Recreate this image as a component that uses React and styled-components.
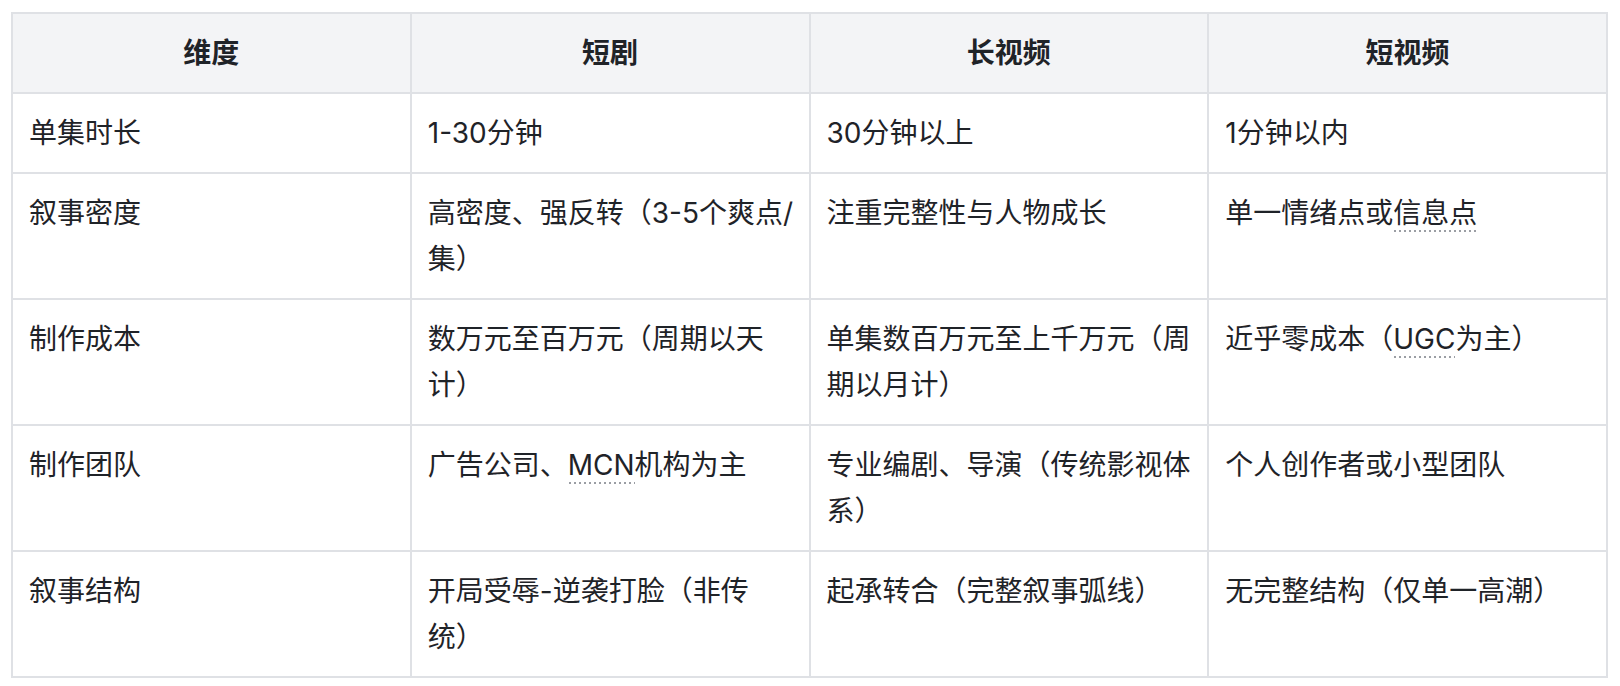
import React from 'react';
import styled, { createGlobalStyle } from 'styled-components';

const GlobalStyle = createGlobalStyle`
  html, body {
    margin: 0;
    padding: 0;
    background: #ffffff;
  }
  body {
    font-family: Inter, "Noto Sans CJK SC", sans-serif;
    color: #1f2328;
  }
`;

const Page = styled.div`
  padding: 12px 12px 10px 11px;
`;

const Table = styled.table`
  width: 100%;
  table-layout: fixed;
  border-collapse: collapse;
  font-size: 28px;
  line-height: 46px;
`;

const HeadCell = styled.th`
  background: #f3f4f6;
  border: 2px solid #dfe1e5;
  padding: 16px 16px;
  font-weight: 600;
  text-align: center;
  color: #1f2328;
`;

const Cell = styled.td`
  border: 2px solid #dfe1e5;
  padding: 16px 16px;
  text-align: left;
  vertical-align: top;
  white-space: nowrap;
  font-weight: 400;
  color: #1f2328;
`;

const Term = styled.span`
  padding-bottom: 2px;
  background-image: linear-gradient(to right, #9b9ea4 2px, transparent 2px);
  background-size: 5px 2px;
  background-repeat: repeat-x;
  background-position: 1px 100%;
`;

const columns = ['维度', '短剧', '长视频', '短视频'];

const rows = [
  ['单集时长', '1-30分钟', '30分钟以上', '1分钟以内'],
  [
    '叙事密度',
    <>高密度、强反转（3-5个爽点/<br />集）</>,
    '注重完整性与人物成长',
    <>单一情绪点或<Term>信息点</Term></>,
  ],
  [
    '制作成本',
    <>数万元至百万元（周期以天<br />计）</>,
    <>单集数百万元至上千万元（周<br />期以月计）</>,
    <>近乎零成本（<Term>UGC</Term>为主）</>,
  ],
  [
    '制作团队',
    <>广告公司、<Term>MCN</Term>机构为主</>,
    <>专业编剧、导演（传统影视体<br />系）</>,
    '个人创作者或小型团队',
  ],
  [
    '叙事结构',
    <>开局受辱-逆袭打脸（非传<br />统）</>,
    '起承转合（完整叙事弧线）',
    '无完整结构（仅单一高潮）',
  ],
];

const App = () => (
  <Page>
    <GlobalStyle />
    <Table>
      <thead>
        <tr>
          {columns.map((c) => (
            <HeadCell key={c}>{c}</HeadCell>
          ))}
        </tr>
      </thead>
      <tbody>
        {rows.map((row) => (
          <tr key={row[0]}>
            {row.map((cell, i) => (
              <Cell key={i}>{cell}</Cell>
            ))}
          </tr>
        ))}
      </tbody>
    </Table>
  </Page>
);

export default App;
